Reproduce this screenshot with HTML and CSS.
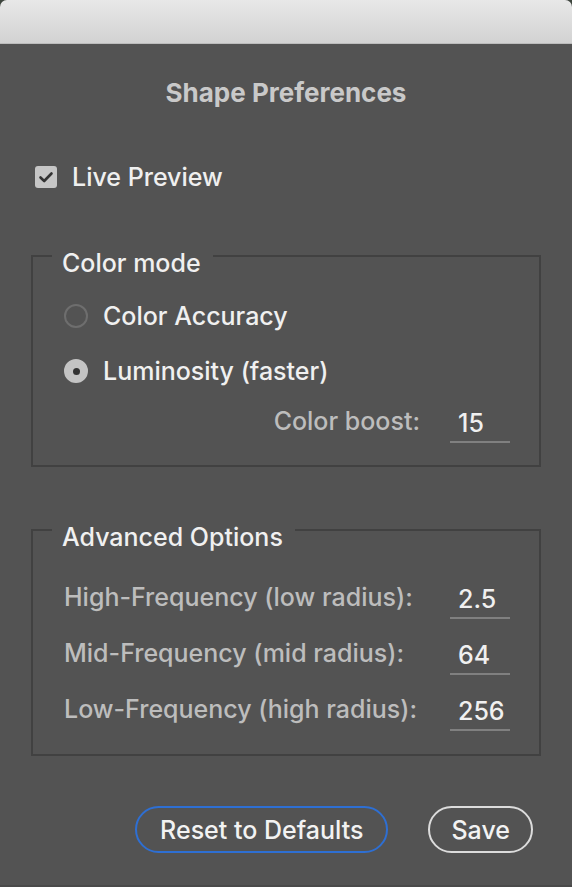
FILE: index.html
```html
<!DOCTYPE html>
<html>
<head>
<meta charset="utf-8">
<link rel="stylesheet" href="styles.css">
</head>
<body>
<div class="window">
  <div class="titlebar"></div>
  <div class="content">
    <h1 class="title">Shape Preferences</h1>
    <label class="check-row">
      <span class="checkbox">
        <svg viewBox="0 0 22 22" width="22" height="22"><path d="M5.5 11.5 L9.2 15 L16.5 7.5" fill="none" stroke="#333" stroke-width="2.6" stroke-linecap="round" stroke-linejoin="round"/></svg>
      </span>
      <span class="check-label">Live Preview</span>
    </label>

    <fieldset class="group group-color">
      <legend class="legend">Color mode</legend>
      <div class="radio-row row-a"><span class="radio"></span><span class="radio-label">Color Accuracy</span></div>
      <div class="radio-row row-b"><span class="radio radio-on"><span class="dot"></span></span><span class="radio-label">Luminosity (faster)</span></div>
      <div class="field-row boost-row"><span class="field-label">Color boost:</span><span class="field-input">15</span></div>
    </fieldset>

    <fieldset class="group group-adv">
      <legend class="legend">Advanced Options</legend>
      <div class="field-row adv-row"><span class="field-label">High-Frequency (low radius):</span><span class="field-input">2.5</span></div>
      <div class="field-row adv-row"><span class="field-label">Mid-Frequency (mid radius):</span><span class="field-input">64</span></div>
      <div class="field-row adv-row"><span class="field-label">Low-Frequency (high radius):</span><span class="field-input">256</span></div>
    </fieldset>

    <div class="buttons">
      <button class="btn btn-primary">Reset to Defaults</button>
      <button class="btn">Save</button>
    </div>
  </div>
</div>
</body>
</html>
```

FILE: styles.css
```css
html, body {
  margin: 0;
  padding: 0;
  background: #3e463e;
}
body {
  font-family: Inter, "Liberation Sans", Arial, sans-serif;
  font-weight: 500;
  width: 572px;
  height: 887px;
  overflow: hidden;
}
.window {
  height: 887px;
  background: #535353;
  border-radius: 7px 7px 0 0;
  overflow: hidden;
  display: flex;
  flex-direction: column;
}
.titlebar {
  height: 43px;
  background: linear-gradient(#e8e8e8, #d2d2d2);
  border-bottom: 1px solid #bcbcbc;
  flex: none;
}
.content {
  flex: 1;
  display: flex;
  flex-direction: column;
  padding: 0 31px;
  border-bottom: 2px solid #4a4a4a;
}
.title {
  margin: 34px 0 0;
  text-align: center;
  font-size: 26px;
  line-height: 30px;
  font-weight: 700;
  color: #c9c9c9;
}
.check-row {
  display: flex;
  align-items: center;
  height: 30px;
  margin-top: 54px;
  padding-left: 4px;
}
.checkbox {
  width: 22px;
  height: 22px;
  border-radius: 3px;
  background: #c6c6c6;
  display: flex;
}
.check-label {
  margin-left: 15px;
  font-size: 25px;
  color: #efefef;
}
.group {
  margin: 0;
  padding: 0;
  border: 2px solid #414141;
  min-width: 0;
}
.group-color {
  margin-top: 43px;
  padding: 12px 29px 22px 31px;
}
.group-adv {
  margin-top: 42px;
  padding: 18px 29px 17px 31px;
}
.legend {
  margin-left: -12px;
  padding: 14px 12px 0 10px;
  font-size: 25px;
  line-height: 28px;
  color: #f0f0f0;
}
.radio-row {
  display: flex;
  align-items: center;
}
.row-a { height: 54px; }
.row-b { height: 56px; }
.radio {
  width: 24px;
  height: 24px;
  border-radius: 50%;
  border: 2px solid #6e6e6e;
  box-sizing: border-box;
  display: flex;
  align-items: center;
  justify-content: center;
}
.radio-on {
  background: #c4c4c4;
  border-color: #c4c4c4;
}
.dot {
  width: 7px;
  height: 7px;
  border-radius: 50%;
  background: #333;
}
.radio-label {
  margin-left: 15px;
  font-size: 25px;
  color: #f0f0f0;
}
.field-row {
  display: flex;
  align-items: center;
}
.boost-row {
  height: 44px;
  justify-content: flex-end;
}
.adv-row {
  height: 56px;
  justify-content: space-between;
}
.field-label {
  font-size: 25px;
  color: #bdbdbd;
}
.boost-row .field-label {
  margin-right: 30px;
}
.field-input {
  width: 60px;
  box-sizing: border-box;
  padding: 0 0 4px 8px;
  margin-top: 10px;
  border-bottom: 2px solid #808080;
  font-size: 25px;
  line-height: 28px;
  color: #f0f0f0;
}
.buttons {
  display: flex;
  justify-content: flex-end;
  gap: 40px;
  margin-top: 50px;
  padding-right: 8px;
}
.btn {
  font-family: Inter, "Liberation Sans", Arial, sans-serif;
  font-weight: 500;
  height: 47px;
  border-radius: 24px;
  background: transparent;
  border: 2px solid #dcdcdc;
  color: #f2f2f2;
  font-size: 25px;
  padding: 0 21px;
}
.btn-primary {
  border-color: #2e6fd3;
  padding: 0 23px;
}
```
